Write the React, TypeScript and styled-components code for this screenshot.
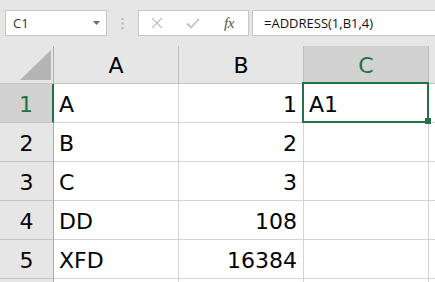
import { createGlobalStyle, styled, css } from 'styled-components';

const GREEN = '#217346';

const GlobalStyle = createGlobalStyle`
  html, body {
    margin: 0;
    padding: 0;
    background: #ffffff;
    overflow: hidden;
  }
  * {
    box-sizing: border-box;
  }
`;

const Page = styled.div`
  width: 435px;
  height: 282px;
  overflow: hidden;
  display: flex;
  flex-direction: column;
  background: #e6e6e6;
`;

const FormulaBar = styled.div`
  height: 46px;
  flex: none;
  display: flex;
  align-items: flex-start;
  padding: 10px 0 0 5px;
  font-family: 'Open Sans', 'Noto Sans', sans-serif;
`;

const Box = styled.div`
  height: 26px;
  background: #ffffff;
  border: 1px solid #c6c6c6;
  display: flex;
  align-items: center;
`;

const NameBox = styled(Box)`
  width: 102px;
  justify-content: space-between;
  padding: 0 6px 0 7px;
  font-size: 13px;
  color: #333333;
`;

const Grip = styled.div`
  width: 31px;
  height: 26px;
  display: flex;
  align-items: center;
  justify-content: center;
`;

const FxBox = styled(Box)`
  width: 111px;
`;

const FxSlot = styled.div`
  width: 36px;
  height: 100%;
  display: flex;
  align-items: center;
  justify-content: center;
`;

const FxText = styled.span`
  font-family: 'Liberation Serif', 'DejaVu Serif', serif;
  font-style: italic;
  font-size: 15px;
  color: #555555;
  letter-spacing: -0.5px;
`;

const FormulaInput = styled(Box)`
  flex: 1;
  margin-left: 3px;
  border-right: none;
  padding-left: 11px;
  font-size: 13px;
  color: #111111;
`;

const Sheet = styled.div`
  flex: 1;
  display: grid;
  grid-template-columns: 54px 125px 125px 125px 1fr;
  grid-template-rows: 38px repeat(6, 39px);
  font-family: 'DejaVu Sans', sans-serif;
  font-size: 22px;
  color: #000000;
`;

const Corner = styled.div`
  background: #e6e6e6;
  border-right: 1px solid #ababab;
  border-bottom: 1px solid #c4c4c4;
  display: flex;
  align-items: flex-end;
  justify-content: flex-end;
  padding: 0 2px 3px 0;
`;

const ColHead = styled.div<{ $active?: boolean }>`
  background: ${(p) => (p.$active ? '#d2d2d2' : '#e6e6e6')};
  color: ${(p) => (p.$active ? GREEN : '#000000')};
  border-right: 1px solid #bdbdbd;
  border-bottom: 1px solid #c4c4c4;
  display: flex;
  align-items: center;
  justify-content: center;
  padding-top: 2px;
`;

const RowHead = styled.div<{ $active?: boolean }>`
  background: ${(p) => (p.$active ? '#d2d2d2' : '#e6e6e6')};
  color: ${(p) => (p.$active ? GREEN : '#000000')};
  border-bottom: 1px solid #c4c4c4;
  border-right: ${(p) => (p.$active ? `2px solid ${GREEN}` : '1px solid #ababab')};
  display: flex;
  align-items: center;
  justify-content: center;
  padding-top: 2px;
`;

const Cell = styled.div<{ $num?: boolean; $selected?: boolean }>`
  position: relative;
  background: #ffffff;
  border-right: 1px solid #d4d4d4;
  border-bottom: 1px solid #d4d4d4;
  display: flex;
  align-items: center;
  padding: 2px 6px 0 5px;
  justify-content: ${(p) => (p.$num ? 'flex-end' : 'flex-start')};
  ${(p) =>
    p.$selected &&
    css`
      z-index: 1;
    `}
`;

const Selection = styled.div`
  position: absolute;
  left: -2px;
  top: -2px;
  right: -1px;
  bottom: -1px;
  border: 2px solid ${GREEN};
  pointer-events: none;
`;

const FillHandle = styled.div`
  position: absolute;
  right: -4px;
  bottom: -3px;
  width: 6px;
  height: 6px;
  background: ${GREEN};
`;

const columns = ['A', 'B', 'C'];

const rows: { a: string; b: string; c: string }[] = [
  { a: 'A', b: '1', c: 'A1' },
  { a: 'B', b: '2', c: '' },
  { a: 'C', b: '3', c: '' },
  { a: 'DD', b: '108', c: '' },
  { a: 'XFD', b: '16384', c: '' },
  { a: '', b: '', c: '' }
];

// only the first five row numbers are visible; row 6 is cut by the window edge
const VISIBLE_ROWS = 5;

export default function App() {
  return (
    <>
      <GlobalStyle />
      <Page>
        <FormulaBar>
          <NameBox>
            <span>C1</span>
            <svg width="7" height="4" viewBox="0 0 7 4">
              <path d="M0 0 H7 L3.5 4 Z" fill="#6a6a6a" />
            </svg>
          </NameBox>
          <Grip>
            <svg width="3" height="11" viewBox="0 0 3 11">
              <rect x="0.5" y="0" width="2" height="2" fill="#b4b4b4" />
              <rect x="0.5" y="4.5" width="2" height="2" fill="#b4b4b4" />
              <rect x="0.5" y="9" width="2" height="2" fill="#b4b4b4" />
            </svg>
          </Grip>
          <FxBox>
            <FxSlot>
              <svg width="12" height="12" viewBox="0 0 12 12">
                <path d="M1 1 L11 11 M11 1 L1 11" stroke="#c2c2c2" strokeWidth="1.4" fill="none" />
              </svg>
            </FxSlot>
            <FxSlot>
              <svg width="14" height="11" viewBox="0 0 14 11">
                <path d="M1 5.5 L5 9.5 L13 1" stroke="#c2c2c2" strokeWidth="1.8" fill="none" />
              </svg>
            </FxSlot>
            <FxSlot>
              <FxText>fx</FxText>
            </FxSlot>
          </FxBox>
          <FormulaInput>=ADDRESS(1,B1,4)</FormulaInput>
        </FormulaBar>
        <Sheet>
          <Corner>
            <svg width="31" height="30" viewBox="0 0 31 30">
              <path d="M0 30 L31 30 L31 0 Z" fill="#b4b4b4" />
            </svg>
          </Corner>
          {columns.map((c) => (
            <ColHead key={c} $active={c === 'C'}>
              {c}
            </ColHead>
          ))}
          <ColHead />
          {rows.map((r, i) => (
            <Row key={i} index={i} row={r} />
          ))}
        </Sheet>
      </Page>
    </>
  );
}

function Row({ index, row }: { index: number; row: { a: string; b: string; c: string } }) {
  const selected = index === 0;
  return (
    <>
      <RowHead $active={selected}>{index < VISIBLE_ROWS ? index + 1 : ''}</RowHead>
      <Cell>{row.a}</Cell>
      <Cell $num>{row.b}</Cell>
      <Cell $selected={selected}>
        {row.c}
        {selected && (
          <Selection>
            <FillHandle />
          </Selection>
        )}
      </Cell>
      <Cell />
    </>
  );
}
